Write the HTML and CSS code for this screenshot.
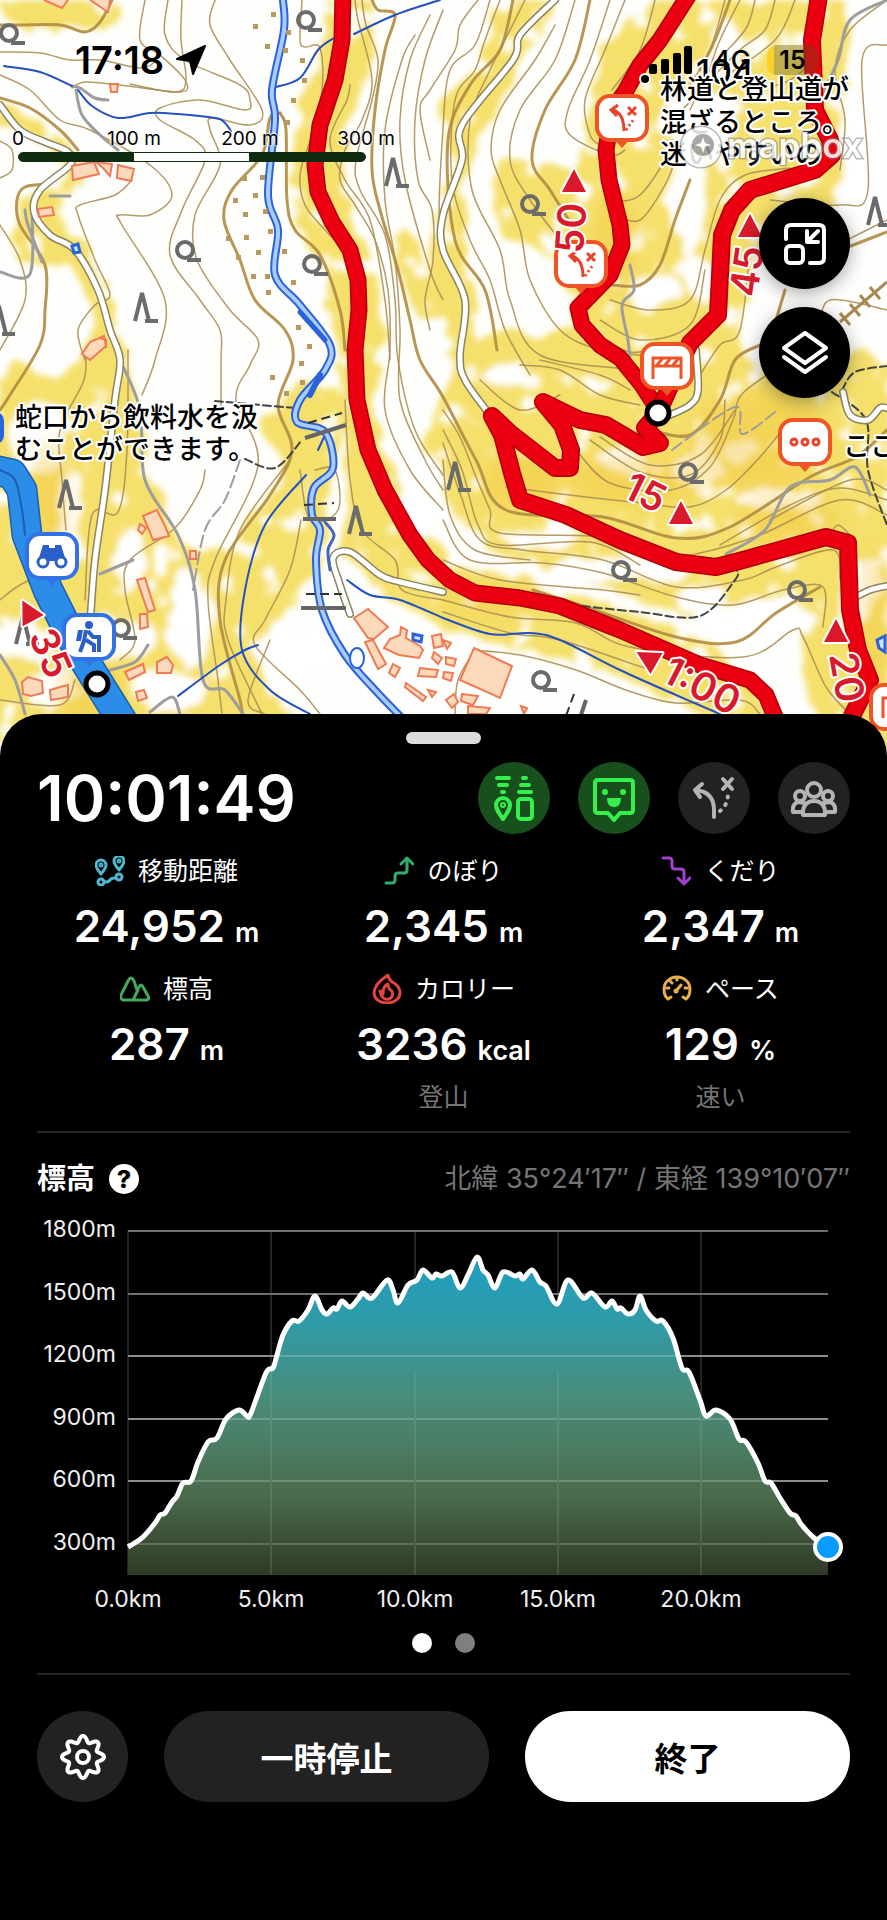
FILE: index.html
```html
<!DOCTYPE html>
<html lang="ja">
<head>
  <meta charset="UTF-8" />
  <meta name="viewport" content="width=device-width, initial-scale=1.0"/>
  <title>活動記録</title>
  <link rel="stylesheet" href="styles.css">
</head>
<body>

  <!-- Map -->
  <header class="map">
    <svg class="map-canvas" viewBox="0 0 887 760" preserveAspectRatio="xMidYMin slice" aria-hidden="true">
      <defs>
        <filter id="mottle" x="0" y="0" width="100%" height="100%">
          <feTurbulence type="fractalNoise" baseFrequency="0.035" numOctaves="2" seed="8" result="noise"/>
          <feDisplacementMap in="SourceGraphic" in2="noise" scale="26" xChannelSelector="R" yChannelSelector="G" result="rough"/>
          <feColorMatrix in="noise" type="matrix" values="0 0 0 0 0  0 0 0 0 0  0 0 0 0 0  0 12 0 0 -3.7" result="mask"/>
          <feComposite in="rough" in2="mask" operator="in"/>
          <feGaussianBlur stdDeviation="3"/>
        </filter>
        <filter id="soft"><feGaussianBlur stdDeviation="9"/></filter>
        <g id="leaf" fill="none" stroke="#6b6b6b" stroke-width="4">
          <circle r="8"/><path d="M4 6v4h12"/>
        </g>
        <g id="conifer" fill="none" stroke="#6b6b6b" stroke-width="4">
          <path d="M-8 14L-1-14L6 14M2 14h13"/>
        </g>
        <path id="tri" d="M0-12L12 11H-12z"/>
        <g id="pin">
          <path d="M-7 22h14L0 30z" stroke="none" fill="currentColor"/>
          <rect x="-25" y="-22" width="50" height="44" rx="13" fill="#fff" stroke="currentColor" stroke-width="4"/>
        </g>
        <g id="fork" fill="none" stroke="#e8432a" stroke-width="3">
          <path d="M2 13C2 0-2-6-9-8M-4-13l-7 5 6 6M6-11l8 8M14-11l-8 8"/>
          <path d="M4 12L12 1" stroke-dasharray="2 3"/>
        </g>
      </defs>

      <rect width="887" height="760" fill="#fefefd"/>
      <g id="terrain" filter="url(#mottle)"></g>
      <g filter="url(#soft)" fill="#f3c63a" opacity=".45">
        <ellipse cx="525" cy="480" rx="40" ry="30"/>
        <ellipse cx="640" cy="480" rx="70" ry="24"/>
        <ellipse cx="760" cy="440" rx="70" ry="50"/>
        <ellipse cx="790" cy="520" rx="50" ry="24"/>
        <ellipse cx="875" cy="620" rx="14" ry="70"/>
        <ellipse cx="50" cy="500" rx="18" ry="60"/>
        <ellipse cx="90" cy="690" rx="30" ry="40"/>
        <ellipse cx="490" cy="600" rx="50" ry="14"/>
        <ellipse cx="615" cy="240" rx="20" ry="50"/>
      </g>
      <g id="contours"></g>
      <g id="paths"></g>

      <!-- Contour dots beside the river -->
      <g id="gravel" fill="#b89a5e"></g>

      <!-- Buildings -->
      <g fill="#fcd9ba" stroke="#ee7a56" stroke-width="2">
        <path d="M44 0l18 8 6-8M90 0l18 12 2-12M110 84h8l-1 8h-6zM72 166l22-4 5 12-26 6zM96 162l16 2-2 12-7-8zM118 165l16 4-3 12-14-3zM38 209l14-2 2 8-15 2z"/>
        <path d="M82 354l8-12 14-6 2 10-16 14zM100 338l6 2 0 8M143 516l14-6 8 16 4 10-16 4-4-10zM140 524l6 4-4 6-4-4z"/>
        <path d="M190 551h6v8h-6zM137 580l8-2 10 32-7 2zM140 614h7l1 13-8 2zM22 682l6-5 14 4 1 12-12 3-8-2zM50 690l10-3 8-2 0 12-17 3zM125 672l18-8 2 8-16 8zM157 662l10-5 6 8-2 8-14 0zM136 692l8-2 3 8-9 3z"/>
        <path d="M354 618l14-9 20 18-14 12-6-1zM365 642l8-2 13 24-8 5zM384 648l6-9 10-4 1-8 6 3-1 8 14 8 3 4-4 8-20-3zM432 636l9-2 2 12-9 2zM434 652l8 6-4 6-6-6zM393 664l7 4-5 9-6-4zM420 668l18 2-2 7-18-1zM406 683l20 14-3 4-18-14zM428 690l8 2-4 5z"/>
        <path d="M474 648l38 18-12 32-40-18zM443 640l8 3-4 6zM446 657l10 2-2 7-8-2zM444 672l9 1-2 8-8-3zM462 694l16 2-5 9-12-4zM446 700l8-6 4 8-6 6zM468 706l22 2-4 6-18 0zM521 706l6 2-3 6z"/>
      </g>
      <g fill="none" stroke="#666" stroke-width="4">
        <path d="M305 438l41-13M303 519h33M301 608h45M586 700l-6 18"/>
        <path d="M308 423l34-10M304 505l30-2M306 594h36M574 694l-8 22" stroke="#333" stroke-width="2" stroke-dasharray="9 5"/>
      </g>

      <use href="#leaf" x="9" y="33"/><use href="#leaf" x="306" y="20"/>
      <use href="#leaf" x="185" y="250"/><use href="#leaf" x="312" y="264"/>
      <use href="#leaf" x="530" y="204"/><use href="#leaf" x="688" y="472"/>
      <use href="#leaf" x="621" y="570"/><use href="#leaf" x="797" y="590"/>
      <use href="#leaf" x="541" y="680"/><use href="#leaf" x="121" y="628"/>
      <use href="#conifer" x="394" y="172"/><use href="#conifer" x="143" y="307"/>
      <use href="#conifer" x="67" y="494"/><use href="#conifer" x="357" y="520"/>
      <use href="#conifer" x="456" y="476"/><use href="#conifer" x="876" y="211"/>
      <use href="#conifer" x="0" y="320"/><use href="#conifer" x="24" y="630"/>

      <g id="routes"></g>

      <!-- Course times -->
      <g class="course">
        <use href="#tri" x="574" y="181"/>
        <use href="#tri" x="750" y="226"/>
        <use href="#tri" x="681" y="513"/>
        <use href="#tri" transform="translate(647 658) rotate(-60)"/>
        <use href="#tri" x="836" y="631"/>
        <use href="#tri" transform="translate(28 611) rotate(-28)"/>
      </g>

      <!-- Spots -->
      <g transform="translate(622 118)" color="#ee5426"><use href="#pin"/><use href="#fork"/></g>
      <g transform="translate(581 264)" color="#ee5426"><use href="#pin"/><use href="#fork"/></g>
      <g transform="translate(667 366)" color="#ee5426">
        <use href="#pin"/>
        <path d="M-14 13V-8h28v21M-14 0h28M-10-1l6-7M-2-1l6-7M6-1l6-7" fill="none" stroke="#ee5426" stroke-width="3"/>
      </g>
      <g transform="translate(805 442)" color="#ee5426">
        <use href="#pin"/>
        <g fill="none" stroke="#e8432a" stroke-width="3"><circle cx="-11" r="3"/><circle r="3"/><circle cx="11" r="3"/></g>
      </g>
      <g transform="translate(896 707)" color="#ee5426">
        <use href="#pin"/><path d="M-13 11V-9h20" fill="none" stroke="#ee5426" stroke-width="3"/>
      </g>
      <path d="M-30 412h24q10 0 10 10v12q0 10-10 10h-24z" fill="#2563e0"/>
      <g transform="translate(52 556)" color="#3173e6">
        <use href="#pin"/>
        <path d="M-14 5l5-16h6v3h6v-3h6l5 16z" fill="#2b5fcb"/>
        <g fill="#fff" stroke="#2b5fcb" stroke-width="3"><circle cx="-9" cy="6" r="5"/><circle cx="9" cy="6" r="5"/></g>
      </g>
      <g transform="translate(89 637)" color="#3173e6">
        <use href="#pin"/>
        <circle cy="-12" r="4" fill="#2b5fcb"/>
        <path d="M-3-7L-5 4L-9 15M-3 3L5 8V15M-1-6L4 0H9M10-2V15" fill="none" stroke="#2b5fcb" stroke-width="4"/>
        <path d="M-11-7h5l-2 11h-5z" fill="#2b5fcb"/>
      </g>

      <g class="course">
        <text transform="translate(583 254) rotate(-86)">50</text>
        <text transform="translate(757 298) rotate(-82)">45</text>
        <text transform="translate(621 496) rotate(26)">15</text>
        <text transform="translate(660 680) rotate(27)">1:00</text>
        <text transform="translate(829 655) rotate(80)">20</text>
        <text transform="translate(28 636) rotate(66)">35</text>
      </g>
      <g fill="#fff" stroke="#000" stroke-width="5"><circle cx="658" cy="413" r="11"/><circle cx="97" cy="684" r="11"/></g>

      <!-- Place notes -->
      <g class="note">
        <circle cx="645" cy="79" r="4"/>
        <text class="height" x="696" y="84">104</text>
        <text x="660" y="99">林道と登山道が</text>
        <text x="660" y="132">混ざるところ。</text>
        <text x="660" y="164">迷いやすいの</text>
        <text x="15" y="427">蛇口から飲料水を汲</text>
        <text x="15" y="459">むことができます。</text>
        <text x="843" y="456">ここ</text>
      </g>

      <g class="mapbox">
        <circle cx="701" cy="147" r="20"/>
        <circle cx="703" cy="145" r="11" fill="#999" stroke="none"/>
        <path d="M703 137l2 6 6 2-6 2-2 6-2-6-6-2 6-2z" stroke="none"/>
        <text x="727" y="158">mapbox</text>
      </g>
    </svg>

    <div class="status">
      <div class="clock">
        <time>17:18</time>
        <svg width="30" height="30" viewBox="0 0 30 30"><path d="M29 1L17 29L14 16L1 14z" stroke="#000" stroke-width="2" stroke-linejoin="round"/></svg>
      </div>
      <div class="signal">
        <svg width="44" height="30" viewBox="0 0 44 30">
          <rect y="19" width="8" height="10" rx="2"/><rect x="12" y="14" width="8" height="15" rx="2"/>
          <rect x="24" y="8" width="8" height="21" rx="2"/><rect x="35" y="1" width="8" height="28" rx="2"/>
        </svg>
        <span class="carrier">4G</span>
        <span class="battery">15</span>
      </div>
    </div>

    <div class="scale">
      <div class="scale-labels"><span>0</span><span>100 m</span><span>200 m</span><span>300 m</span></div>
      <div class="scale-bar"></div>
    </div>

    <div class="map-buttons">
      <button aria-label="地図を縮小">
        <svg width="44" height="44" viewBox="0 0 44 44">
          <path d="M3 17V8q0-5 5-5h28q5 0 5 5v28q0 5-5 5h-9"/>
          <rect x="3" y="24" width="17" height="17" rx="4"/>
          <path d="M35 9L25 19M24 9v11h11"/>
        </svg>
      </button>
      <button aria-label="レイヤー">
        <svg width="48" height="48" viewBox="0 0 48 48">
          <path d="M24 4L45 19L24 34L3 19z"/><path d="M3 28L24 43L45 28"/>
        </svg>
      </button>
    </div>
  </header>

  <!-- Activity sheet -->
  <main class="sheet">
    <div class="handle"></div>

    <div class="sheet-head">
      <h1>10:01:49</h1>
      <div class="toggles">
        <button class="on" aria-label="ランドマーク">
          <svg width="48" height="48" viewBox="0 0 48 48">
            <path d="M7 4h12M9 11h8M12 18h2M33 4h3M31 11h8M29 18h12"/>
            <path d="M13 45C8 38 6 35 6 31a7 7 0 0 1 14 0c0 4-2 7-7 14z"/>
            <circle cx="13" cy="31" r="1"/>
            <rect x="28" y="25" width="14" height="20" rx="3"/><path d="M32 25h6"/>
          </svg>
        </button>
        <button class="on" aria-label="フィールドメモ">
          <svg width="48" height="48" viewBox="0 0 48 48">
            <path d="M8 6h32q3 0 3 3v27q0 3-3 3h-10l-6 7-6-7H8q-3 0-3-3V9q0-3 3-3z"/>
            <circle class="solid" cx="15" cy="18" r="3"/><circle class="solid" cx="33" cy="18" r="3"/>
            <path class="solid" d="M17 24h14q0 9-7 9t-7-9z"/>
          </svg>
        </button>
        <button aria-label="道迷い注意">
          <svg width="48" height="48" viewBox="0 0 48 48">
            <path d="M24 43V36C24 24 18 17 5 16M12 10L5 16L10 23"/>
            <path d="M33 5l9 10M42 5l-9 10"/>
            <path d="M30 37C35 33 38 28 38 19" stroke-dasharray="1 7"/>
          </svg>
        </button>
        <button aria-label="なかま">
          <svg width="48" height="48" viewBox="0 0 48 48">
            <circle cx="24" cy="16" r="7"/><circle cx="10" cy="22" r="5"/><circle cx="38" cy="22" r="5"/>
            <path d="M13 41c-1-9 4-14 11-14s12 5 11 14zM12 38H3q-1-9 6-10l5 1M36 38h9q1-9-6-10l-5 1"/>
          </svg>
        </button>
      </div>
    </div>

    <section class="stats">
      <div class="stat">
        <p class="label">
          <svg width="30" height="30" viewBox="0 0 30 30" stroke="#4fb8d0">
            <path d="M6 18Q1 12 1 9a5 5 0 0 1 10 0q0 3-5 9zM24 14q-5-6-5-9a5 5 0 0 1 10 0q0 3-5 9zM10 26q4 0 5-2t5-2"/>
            <circle cx="6" cy="9" r="1"/><circle cx="24" cy="5" r="1"/>
            <circle cx="6" cy="26" r="3"/><circle cx="24" cy="21" r="3"/>
          </svg>
          移動距離
        </p>
        <p class="value">24,952 <small>m</small></p>
      </div>
      <div class="stat">
        <p class="label">
          <svg width="30" height="30" viewBox="0 0 30 30" stroke="#2fae6e"><path d="M2 27h6q3 0 3-3v-4q0-3 3-3h6q3 0 3-3V3M17 8l6-6 6 6"/></svg>
          のぼり
        </p>
        <p class="value">2,345 <small>m</small></p>
      </div>
      <div class="stat">
        <p class="label">
          <svg width="30" height="30" viewBox="0 0 30 30" stroke="#a43fd0"><path d="M2 2h6q3 0 3 3v5q0 3 3 3h6q3 0 3 3v11M17 22l6 6 6-6"/></svg>
          くだり
        </p>
        <p class="value">2,347 <small>m</small></p>
      </div>
      <div class="stat">
        <p class="label">
          <svg width="30" height="30" viewBox="0 0 30 30" stroke="#45a860"><path d="M4 26h22q4 0 2-4l-5-9q-2-4-4 0l-2 3-3-9q-3-6-6 0L1 21q-1 5 3 5zM13 26l5-10"/></svg>
          標高
        </p>
        <p class="value">287 <small>m</small></p>
      </div>
      <div class="stat">
        <p class="label">
          <svg width="30" height="30" viewBox="0 0 30 30" stroke="#e2453f">
            <path d="M16 1q1 6 6 8 6 4 6 10a13 10 0 0 1-26 0C2 13 7 7 16 1z"/>
            <path d="M8 17q3 0 3 3 0-8 5-10 0 5 4 7 2 6-3 8-7 2-9-8z"/>
          </svg>
          カロリー
        </p>
        <p class="value">3236 <small>kcal</small></p>
        <p class="sub">登山</p>
      </div>
      <div class="stat">
        <p class="label">
          <svg width="30" height="30" viewBox="0 0 30 30" stroke="#e8b04a">
            <path d="M6 25q-4-3-4-10a13 12 0 0 1 26 0q0 7-4 10l-3-2M6 25l3-2M15 4v2M5 14h2M23 14h2M8 7l2 2M14 17l5-6"/>
            <circle cx="14" cy="17" r="1"/>
          </svg>
          ペース
        </p>
        <p class="value">129 <small>%</small></p>
        <p class="sub">速い</p>
      </div>
    </section>

    <section class="elevation">
      <div class="elevation-head">
        <h2>標高</h2>
        <button class="help" aria-label="標高について">?</button>
        <p class="position">北緯 35°24′17″ / 東経 139°10′07″</p>
      </div>

      <svg class="chart" viewBox="0 0 813 400" role="img" aria-label="標高グラフ">
        <defs>
          <linearGradient id="area" x1="0" y1="26" x2="0" y2="344" gradientUnits="userSpaceOnUse">
            <stop offset="0" stop-color="#1f9fc0"/>
            <stop offset=".2" stop-color="#2f9ba8"/>
            <stop offset=".45" stop-color="#4a8c7a"/>
            <stop offset=".75" stop-color="#4a6b4b"/>
            <stop offset="1" stop-color="#2f3a26"/>
          </linearGradient>
        </defs>
        <g transform="translate(91 16)">
          <g id="gridX"></g>
          <g id="gridY"></g>
          <path id="chartArea" fill="url(#area)"/>
          <g id="gridOver" opacity=".2"></g>
          <path id="chartLine" fill="none" stroke="#fff" stroke-width="5" stroke-linejoin="round"/>
          <circle cx="700" cy="316" r="13" fill="#0a9bff" stroke="#fff" stroke-width="4"/>
        </g>
      </svg>

      <nav class="pager">
        <button class="current" aria-label="1ページ目"></button>
        <button aria-label="2ページ目"></button>
      </nav>
    </section>

    <div class="actions">
      <button class="settings" aria-label="設定">
        <svg width="46" height="46" viewBox="0 0 46 46">
          <path id="gear"/><circle cx="23" cy="23" r="6"/>
        </svg>
      </button>
      <button class="pause">一時停止</button>
      <button class="finish">終了</button>
    </div>
  </main>

  <script src="script.js"></script>
</body>
</html>
```
FILE: styles.css
```css
* {
  box-sizing: border-box;
}
body {
  margin: 0;
  min-height: 100vh;
  display: flex;
  flex-direction: column;
  background: #000;
  color: #fff;
  font-family: Inter, "Noto Sans CJK JP", sans-serif;
}
h1, h2, p {
  margin: 0;
}
button {
  border: none;
  padding: 0;
  font: inherit;
  color: inherit;
  cursor: pointer;
}

/* Map */
.map {
  position: relative;
  height: 760px;
  color: #000;
  overflow: hidden;
}
.map-canvas {
  position: absolute;
  inset: 0;
  width: 100%;
  height: 100%;
}
.status {
  position: relative;
  display: flex;
  justify-content: space-between;
  padding: 40px 69px 0 75px;
  height: 80px;
}
.clock, .signal {
  display: flex;
  align-items: center;
  height: 40px;
}
.clock {
  gap: 12px;
  font-size: 38px;
  font-weight: 600;
}
.signal {
  font-size: 27px;
  font-weight: 600;
}
.carrier {
  margin-left: 20px;
  font-weight: 500;
}
.battery {
  margin-left: 16px;
  width: 51px;
  line-height: 30px;
  border-radius: 9px;
  text-align: center;
  font-size: 25px;
  background: linear-gradient(90deg, rgba(250, 205, 20, 0.8) 14%, rgba(90, 80, 20, 0.35) 14%);
}
.scale {
  position: relative;
  width: 348px;
  margin: 48px 0 0 18px;
}
.scale-labels {
  display: flex;
  justify-content: space-between;
  line-height: 22px;
  font-size: 19px;
  text-shadow: 0 0 2px #fff, 0 0 3px #fff, 0 0 3px #fff;
}
.scale-labels span {
  width: 0;
  display: flex;
  justify-content: center;
  white-space: nowrap;
}
.scale-bar {
  height: 10px;
  margin-top: 2px;
  border-radius: 5px;
  border: 1px solid #0f2c10;
  background: linear-gradient(90deg, #0f2c10 33.3%, #fff 33.3%, #fff 66.6%, #0f2c10 66.6%);
}
.map-buttons {
  position: absolute;
  top: 198px;
  right: 37px;
  display: grid;
  gap: 18px;
}
.map-buttons button {
  width: 91px;
  height: 91px;
  border-radius: 50%;
  background: #000;
  display: grid;
  place-items: center;
  box-shadow: 0 4px 18px rgba(0, 0, 0, 0.35);
}
.map-buttons svg {
  fill: none;
  stroke: #fff;
  stroke-width: 4;
  stroke-linecap: round;
  stroke-linejoin: round;
}
.course {
  fill: #d91a2c;
  stroke: #fff;
  stroke-width: 4;
  stroke-linejoin: round;
  paint-order: stroke;
  font-size: 39px;
  font-weight: 600;
}
.note {
  fill: #000;
  stroke: #fff;
  stroke-width: 4;
  stroke-linejoin: round;
  paint-order: stroke;
  font-size: 27px;
  font-weight: 500;
}
.note .height {
  font-size: 34px;
}
.mapbox {
  fill: #fff;
  stroke: rgba(120, 120, 120, 0.6);
  stroke-width: 3;
  paint-order: stroke;
  font-size: 35px;
  font-weight: 600;
  opacity: 0.85;
}

/* Sheet */
.sheet {
  position: relative;
  flex: 1;
  margin-top: -46px;
  padding: 18px 37px 36px;
  border-radius: 42px 42px 0 0;
  background: #000;
}
.handle {
  width: 75px;
  height: 12px;
  margin: 0 auto;
  border-radius: 6px;
  background: #dcdcdc;
}
.sheet-head {
  display: flex;
  align-items: center;
  justify-content: space-between;
  margin-top: 18px;
}
h1 {
  font-size: 63px;
  line-height: 72px;
  font-weight: 600;
}
.toggles {
  display: flex;
  gap: 28px;
}
.toggles button {
  width: 72px;
  height: 72px;
  border-radius: 50%;
  display: grid;
  place-items: center;
  background: #222;
  color: #b4b4b4;
}
.toggles .on {
  background: #17501c;
  color: #35f04a;
}
.toggles svg {
  fill: none;
  stroke: currentColor;
  stroke-width: 4;
  stroke-linecap: round;
  stroke-linejoin: round;
}
.toggles .solid {
  fill: currentColor;
  stroke: none;
}

.stats {
  display: grid;
  grid-template-columns: repeat(3, 1fr);
  row-gap: 20px;
  margin: 22px -9px 0;
  text-align: center;
}
.label {
  display: flex;
  align-items: center;
  justify-content: center;
  gap: 13px;
  font-size: 25px;
  line-height: 30px;
}
.label svg {
  fill: none;
  stroke-width: 3;
  stroke-linecap: round;
  stroke-linejoin: round;
}
.value {
  display: flex;
  align-items: baseline;
  justify-content: center;
  gap: 10px;
  height: 56px;
  margin-top: 12px;
  font-size: 44px;
  line-height: 56px;
  font-weight: 600;
}
.value small {
  font-size: 27px;
}
.sub {
  margin-top: 10px;
  font-size: 25px;
  line-height: 30px;
  color: #757575;
}

.elevation {
  margin-top: 19px;
  padding: 28px 0 20px;
  border-top: 2px solid #262626;
  border-bottom: 2px solid #262626;
}
.elevation-head {
  display: flex;
  align-items: center;
  height: 36px;
}
h2 {
  font-size: 29px;
  line-height: 36px;
  font-weight: 700;
}
.help {
  width: 30px;
  height: 30px;
  margin-left: 14px;
  border-radius: 50%;
  background: #fff;
  color: #000;
  font-size: 25px;
  line-height: 30px;
  font-weight: 800;
}
.position {
  margin-left: auto;
  font-size: 27px;
  line-height: 36px;
  color: #757575;
}
.chart {
  display: block;
  width: 100%;
  margin-top: 18px;
}
.chart text {
  fill: #f0f0f0;
  font-size: 23px;
}
.pager {
  display: flex;
  justify-content: center;
  gap: 23px;
  margin-top: 18px;
}
.pager button {
  width: 20px;
  height: 20px;
  border-radius: 50%;
  background: #7f7f7f;
}
.pager .current {
  background: #fff;
}

.actions {
  display: grid;
  grid-template-columns: 91px 1fr 1fr;
  gap: 36px;
  margin-top: 36px;
}
.actions button {
  height: 91px;
  border-radius: 46px;
  background: #222;
  font-size: 33px;
  font-weight: 700;
}
.settings {
  display: grid;
  place-items: center;
}
.settings svg {
  fill: none;
  stroke: #fff;
  stroke-width: 4;
}
.actions .finish {
  background: #fff;
  color: #000;
}
```
FILE: script.js
```js
const SVG = 'http://www.w3.org/2000/svg';

function parse(str) {
  return str.trim().split(/\s+/).map(p => p.split(',').map(Number));
}

// rounded curve through every point
function smooth(pts) {
  let d = `M${pts[0]}`;
  for (let i = 0; i < pts.length - 1; i++) {
    const a = pts[i - 1] || pts[i], b = pts[i], c = pts[i + 1], e = pts[i + 2] || c;
    d += `C${b[0] + (c[0] - a[0]) / 6},${b[1] + (c[1] - a[1]) / 6} ${c[0] - (e[0] - b[0]) / 6},${c[1] - (e[1] - b[1]) / 6} ${c}`;
  }
  return d;
}

function add(parent, tag, attrs, text) {
  const el = document.createElementNS(SVG, tag);
  for (const key in attrs) el.setAttribute(key, attrs[key]);
  if (text) el.textContent = text;
  document.getElementById(parent).appendChild(el);
}

function line(parent, str, color, width, extra) {
  add(parent, 'path', { d: smooth(parse(str)), fill: 'none', stroke: color, 'stroke-width': width, 'stroke-linejoin': 'round', 'stroke-linecap': 'round', ...extra });
}

// Terrain shading
const yellow = [
  '322,0 325,40 302,100 290,200 315,260 335,330 340,420 350,500 340,540 380,590 440,625 520,650 600,670 680,705 740,740 770,714 700,640 560,590 460,560 410,500 385,440 372,400 385,330 372,260 345,190 352,120 375,60 370,0',
  '640,0 600,60 585,130 575,170 500,160 500,230 550,260 570,330 480,340 440,400 430,450 460,520 520,560 640,600 720,625 790,590 800,640 830,740 887,740 887,480 887,370 830,350 760,370 740,330 760,260 840,190 845,90 850,0',
  '500,0 480,60 440,110 455,170 430,240 440,320 460,380 480,330 465,250 470,170 510,90 560,0',
  '0,105 30,120 80,155 75,190 20,200 20,260 70,270 90,330 60,380 0,390 0,740 250,740 220,640 235,560 180,540 150,460 125,360 105,280 60,200 60,160 0,120',
  '300,380 260,430 285,470 240,530 215,600 220,660 260,740 300,740 260,650 300,600 320,560 330,470 345,400',
  '390,240 405,290 420,320 440,310 410,230',
  '0,0 20,30 110,25 110,0'
];
yellow.forEach(s => add('terrain', 'path', { d: smooth(parse(s)) + 'z', fill: '#f5e06c' }));

const clearings = '690,200,14,60 700,120,40,28 655,290,26,16 700,280,14,24 540,540,40,8 620,570,70,13 760,620,60,18 700,600,30,14 700,470,26,16 740,450,20,12 780,500,40,10 510,375,24,10 40,440,30,34 20,640,26,22 70,520,12,50 130,560,16,30 120,640,40,20 190,620,20,50 170,690,36,20 50,690,26,16 300,650,50,22 420,500,20,40 860,590,18,30 860,150,20,60 620,460,24,12 725,50,16,30';
clearings.split(' ').forEach(s => {
  const [cx, cy, rx, ry] = s.split(',');
  add('terrain', 'ellipse', { cx, cy, rx, ry, fill: '#fff' });
});

// Contour lines
const contours = [
  '145,0 140,40 160,55 185,80 180,92 120,85 85,82 72,88',
  '168,0 165,35 185,60 240,85 250,100 245,110 200,100 160,108 160,120 195,140 205,160 182,210 170,255 200,300 220,330 221,360 221,410',
  '182,0 181,40 186,80 175,92 130,84',
  '215,0 210,25 230,60 262,110 250,125 212,118 210,130 220,165 195,215 197,260 230,310 258,340 250,365 236,400 258,465 215,560 208,600 218,680 222,714',
  '0,52 40,53 70,60 100,60 140,68 155,62',
  '0,75 30,90 60,120 90,130 150,165 172,195 150,215 120,215 122,225 165,300 155,360 142,395',
  '132,180 115,195 80,205 78,215 95,260 110,295 95,305 78,330 85,360',
  '85,350 84,380 60,430 62,480 66,530', '0,225 20,260 25,300 0,350',
  '128,350 127,450 118,512 92,515 85,600', '205,470 200,490 175,528 130,560 125,590 135,640 120,660',
  '0,600 20,585 60,565', '0,700 60,705 75,680', '0,141 12,150 12,170 0,178',
  '302,0 300,40 305,47 320,48 322,90 310,140 300,175 305,205 325,230 345,250',
  '350,85 347,100 330,140 345,180 370,220 385,300 390,360',
  '355,0 358,20 372,80 362,120 345,150 340,180 355,205 375,240 388,290 390,350 385,410 410,470 443,510',
  '362,0 366,25 378,60 372,100 356,160 360,190 385,235 395,300 398,360 415,430 443,475',
  '415,35 402,60 385,130 385,200 395,260 400,330 400,400 425,460 443,490',
  '430,15 410,60 400,120 405,180 430,270 443,300',
  '443,10 425,60 415,120 418,180 432,210 433,260 425,300 430,330',
  '478,0 460,25 455,50 430,90 420,110 430,160',
  '490,0 475,45 450,70 443,130 440,230 460,280 465,320',
  '500,0 485,40 475,70 455,100 452,180 470,240 490,280 505,330 530,375',
  '525,0 505,40 490,70 470,120 472,190 500,250 510,300 540,355 640,370',
  '555,25 535,60 500,110 491,150 500,180 520,230 530,280 560,330 600,350 640,355',
  '575,0 555,60 520,110 510,160 530,200 560,240',
  '610,0 590,60 568,110 570,135 610,155 625,150', '625,0 605,50 585,100 590,135 600,145',
  '655,0 640,50 612,90', '670,20 655,50 640,75',
  '618,202 640,195 665,160 672,140', '614,215 640,220 665,185 675,160',
  '610,300 650,310 690,300 705,250 720,200 745,175 790,168',
  '600,320 640,340 690,325 705,270', '595,335 630,352 655,348',
  '725,0 710,50 690,85', '740,0 720,40 700,90 670,120', '755,0 745,30 710,70 690,110',
  '775,0 765,30 740,50 700,90', '795,0 775,40 720,80', '815,60 790,80 760,90', '887,45 862,60 868,190 840,205 770,200',
  '887,0 850,30 835,70 845,120 840,170', '847,240 887,220', '750,250 740,330 720,345 700,375', '887,310 830,300 820,330',
  '480,380 520,410 560,395', '520,365 560,370 600,395 640,405',
  '540,360 600,375 630,390', '576,450 610,483 670,490 710,467 733,420 743,393 790,360',
  '590,440 640,472 690,475 720,440 725,400', '600,437 650,465 700,455 735,410',
  '506,487 586,497 643,503 690,507 726,490 760,457 790,420',
  '443,410 460,437 476,477 490,510 500,533 603,537 656,557 700,553 760,535 840,500 887,515',
  '443,430 462,470 478,525 500,545 590,542 640,565',
  '443,443 460,493 480,540 523,550 603,560 676,587 743,580 776,567 833,550 840,580',
  '443,520 470,560 543,563 603,573 676,597 733,605 783,590 823,587 823,627',
  '443,460 450,515 475,550 530,560', '443,560 500,580 603,590 640,595',
  '443,600 510,617 576,623 630,647 743,657 793,630 803,637 826,687 850,714',
  '443,612 510,633 560,640 650,670', '473,650 520,655 576,670 626,690 676,703 740,700 760,714',
  '475,650 458,680 455,714', '720,545 790,505 840,488 887,500', '770,520 850,480 887,490',
  '345,400 350,480 362,530 395,560 402,590 443,600', '301,520 290,570 265,620 255,645 300,690 320,714',
  '270,640 248,700 265,714', '290,460 240,530 226,600 228,640 262,714', '300,470 310,520 338,510 335,470 315,470',
  '830,535 838,525 850,535'
];
contours.forEach(s => line('contours', s, '#a88a50', 1.5, { opacity: 0.85 }));

const thick = [
  '0,25 20,25 60,25 85,32 100,22 112,0', '0,98 30,108 60,130 78,150',
  '50,184 25,187 17,200 20,225 45,265 45,310 40,345 10,395 0,410',
  '280,113 270,118 262,155 232,190 224,220 240,260 255,300 285,330 293,360 278,405 292,450 270,495 225,560 220,620 240,700 242,714',
  '280,113 286,130 287,200 295,230 320,255 340,310 345,350',
  '372,0 378,10 395,15 385,50 375,110 372,170 380,210 398,270 410,320 420,360 443,397 476,460 506,510 603,517 676,538 730,527 810,477 856,457 887,430',
  '513,0 500,50 470,85 448,140 455,240 485,290 497,350',
  '590,0 575,60 545,110 532,160 550,190 575,230',
  '612,285 640,285 660,265 675,220 690,180', '730,0 715,40 700,70',
  '533,590 586,607 676,637 736,642 776,613 820,587', '650,430 690,435 720,400 735,360 760,345', '848,247 887,232', '785,290 770,340'
];
thick.forEach(s => line('contours', s, '#b08c42', 3, { opacity: 0.9 }));

// Tracks
['72,86 80,88 95,98 108,100', '76,90 82,115 100,135 118,150', '0,272 30,274 32,210', '25,210 28,225 42,262', '50,196 70,196',
 '120,360 140,410 145,480 178,535 195,590 203,680 225,690 243,714', '100,574 133,560', '110,670 135,662 148,645', '0,655 15,680 25,714', '150,712 172,697 180,714',
 '630,265 634,290 622,305 628,340 630,360', '887,0 850,20 838,60 822,95 815,120',
 '726,554 765,530 790,487 830,480 855,467 870,495'].forEach(s => line('paths', s, '#9d9d9d', 3));
['240,460 225,500 205,530 193,590', '672,450 735,407 742,434 775,412'].forEach(s => line('paths', s, '#9d9d9d', 2, { 'stroke-dasharray': '12 5' }));
['215,401 295,408', '245,459 275,468 302,440', '582,606 640,612 700,616 735,580 737,570', '832,392 866,420 868,470 887,525', '842,390 855,372 887,366'].forEach(s => line('paths', s, '#444', 2, { 'stroke-dasharray': '8 4' }));

function road(s) {
  line('paths', s, '#8a8460', 8);
  line('paths', s, '#fff', 5);
}
road('0,105 20,130 45,142 68,152 70,165 40,190 34,212 50,235 75,250 98,290 110,330 120,360 115,400 105,490 95,560 90,625');
road('555,0 520,35 513,60 462,125 462,160 443,215 443,250 465,300 460,355 465,380 490,415');
road('443,592 400,582 380,575 350,552 333,558 340,585 350,614');
road('696,350 698,390 690,405 670,415');
road('850,600 870,590 887,586');
road('843,392 850,415 868,420 880,408 887,408');

// Streams and river
['4,66 40,72 72,86', '78,90 92,106 118,118 150,113 178,114 215,118 224,122 231,131', '276,87 300,78 318,50 334,38', '354,34 395,15 440,0',
 '306,475 265,525 245,590 242,650 270,690 310,714', '178,696 220,665 245,650 258,645', '443,618 490,634 530,633 560,640 620,670 676,695 720,714',
 '347,580 370,595 400,600 443,618', '325,435 318,450'].forEach(s => line('paths', s, '#2450c0', 2));
const river = '283,0 284,30 272,90 275,120 268,195 278,230 275,275 300,305 330,345 325,370 300,400 297,422 325,432 333,468 314,488 312,515 320,530 316,560 322,610 345,655 375,690 402,718';
line('paths', river, '#2a62d8', 8);
line('paths', river, '#a8ccff', 4);
line('paths', '300,312 325,340', '#2a62d8', 5);
line('paths', '310,395 320,375', '#2a62d8', 6);
line('paths', '325,522 334,535 328,550 330,570', '#3f66c0', 3);
add('paths', 'ellipse', { cx: 357, cy: 658, rx: 7, ry: 10, fill: '#fff', stroke: '#2a62d8', 'stroke-width': 2 });
add('paths', 'path', { d: 'M877 640l8-4v16l-6-4zM413 634l9 2-1 6-8-2zM72 246l6-2 2 8-6 1z', fill: '#cfe4ff', stroke: '#2a62d8', 'stroke-width': 3 });
// steps on the east slope
add('paths', 'path', { d: 'M840 322L887 282M850 325l-10-12M860 316l-10-12M870 307l-10-12M880 299l-10-12', fill: 'none', stroke: '#a88a50', 'stroke-width': 3 });

'273,14 255,26 288,32 267,46 285,50 302,60 304,80 293,100 287,122 244,178 262,177 235,200 255,195 245,214 265,211 228,238 246,237 270,231 238,257 258,252 284,251 253,276 267,276 268,292 293,282 298,327 309,346 272,377 302,382 286,393 301,363'
  .split(' ').forEach(s => {
    const [x, y] = s.split(',');
    add('gravel', 'rect', { x: x - 2, y: y - 2, width: 5, height: 5 });
  });

// Routes
function route(s, edge, fill, width) {
  const d = 'M' + s.split(' ').join('L');
  [[edge, width], [fill, width - 3]].forEach(([stroke, w]) =>
    add('routes', 'path', { d, fill: 'none', stroke, 'stroke-width': w, 'stroke-linejoin': 'round', 'stroke-linecap': 'round' }));
}
route('-6,470 12,474 22,490 27,535 48,590 78,650 124,724', '#1b5fae', '#2b8de8', 31);
line('routes', '0,470 15,480 22,510 25,535', '#1b5fae', 2);
route('343,-10 342,40 335,80 320,125 315,165 318,192 332,222 350,250 358,280 359,310 355,350 357,400 368,450 385,490 410,535 428,560 450,580 475,593 520,598 560,606 620,630 700,665 750,680 766,695 778,724', '#b0000a', '#ea0010', 17);
route('692,-10 660,40 640,65 625,92 612,110 606,150 609,180 620,225 622,245 610,275 578,308 582,325 600,345 620,358 642,385 658,410', '#b0000a', '#ea0010', 17);
route('820,-10 812,40 815,110 830,140 832,155 815,170 750,190 732,210 722,235 718,315 690,343 675,375 658,413 645,428 660,443 643,447 606,425 580,420 543,402 562,425 571,450 570,468 555,468 510,433 492,416 502,435 512,473 520,500 566,515 620,540 676,562 716,567 743,560 826,537 848,543 850,610 858,650 870,680 850,720', '#b0000a', '#ea0010', 18);

// Elevation chart
const profile = parse('0,316 5,313 15,306 27,292 32,284 37,282 44,271 49,265 55,252 63,250 70,231 80,211 89,207 98,188 111,179 119,185 123,182 138,142 145,137 149,124 155,104 164,90 171,90 180,79 187,65 194,79 199,83 205,77 209,78 214,70 222,76 230,68 235,62 244,67 259,49 265,59 270,72 280,54 289,49 295,39 304,47 308,43 314,45 324,41 332,57 340,44 349,26 355,39 360,44 367,57 375,41 387,45 392,43 395,48 404,39 412,51 418,55 429,73 440,49 455,67 464,62 477,76 484,70 489,78 493,77 500,83 507,79 512,65 518,79 528,90 535,90 545,107 554,137 561,141 572,169 578,185 588,179 602,188 611,208 618,211 630,232 637,250 643,252 652,267 662,282 668,285 673,293 685,306 700,316');
const curve = smooth(profile);
document.getElementById('chartLine').setAttribute('d', curve);
document.getElementById('chartArea').setAttribute('d', curve + 'V344H0z');

[1800, 1500, 1200, 900, 600, 300].forEach((m, i) => {
  const y = Math.round(i * 62.6);
  const d = `M0 ${y}H700`;
  add('gridY', 'path', { d, stroke: '#707070', 'stroke-width': 2 });
  if (i > 1) add('gridOver', 'path', { d, stroke: '#fff', 'stroke-width': 2 });
  add('gridY', 'text', { x: -12, y: y + 6, 'text-anchor': 'end' }, m + 'm');
});
[0, 5, 10, 15, 20].forEach((km, i) => {
  const x = Math.round(i * 143.3);
  add('gridX', 'path', { d: `M${x} 0V344`, stroke: '#242424', 'stroke-width': 2 });
  if (i) add('gridOver', 'path', { d: `M${x} ${i === 4 ? 172 : 140}V344`, stroke: '#9fb09f', 'stroke-width': 2 });
  add('gridX', 'text', { x, y: 376, 'text-anchor': 'middle' }, km.toFixed(1) + 'km');
});

// Settings gear
const teeth = [];
for (let i = 0; i <= 96; i++) {
  const a = i / 96 * Math.PI * 2;
  const r = 18 + 3 * Math.cos(a * 8);
  teeth.push([23 + r * Math.sin(a), 23 - r * Math.cos(a)]);
}
document.getElementById('gear').setAttribute('d', smooth(teeth) + 'z');
```
